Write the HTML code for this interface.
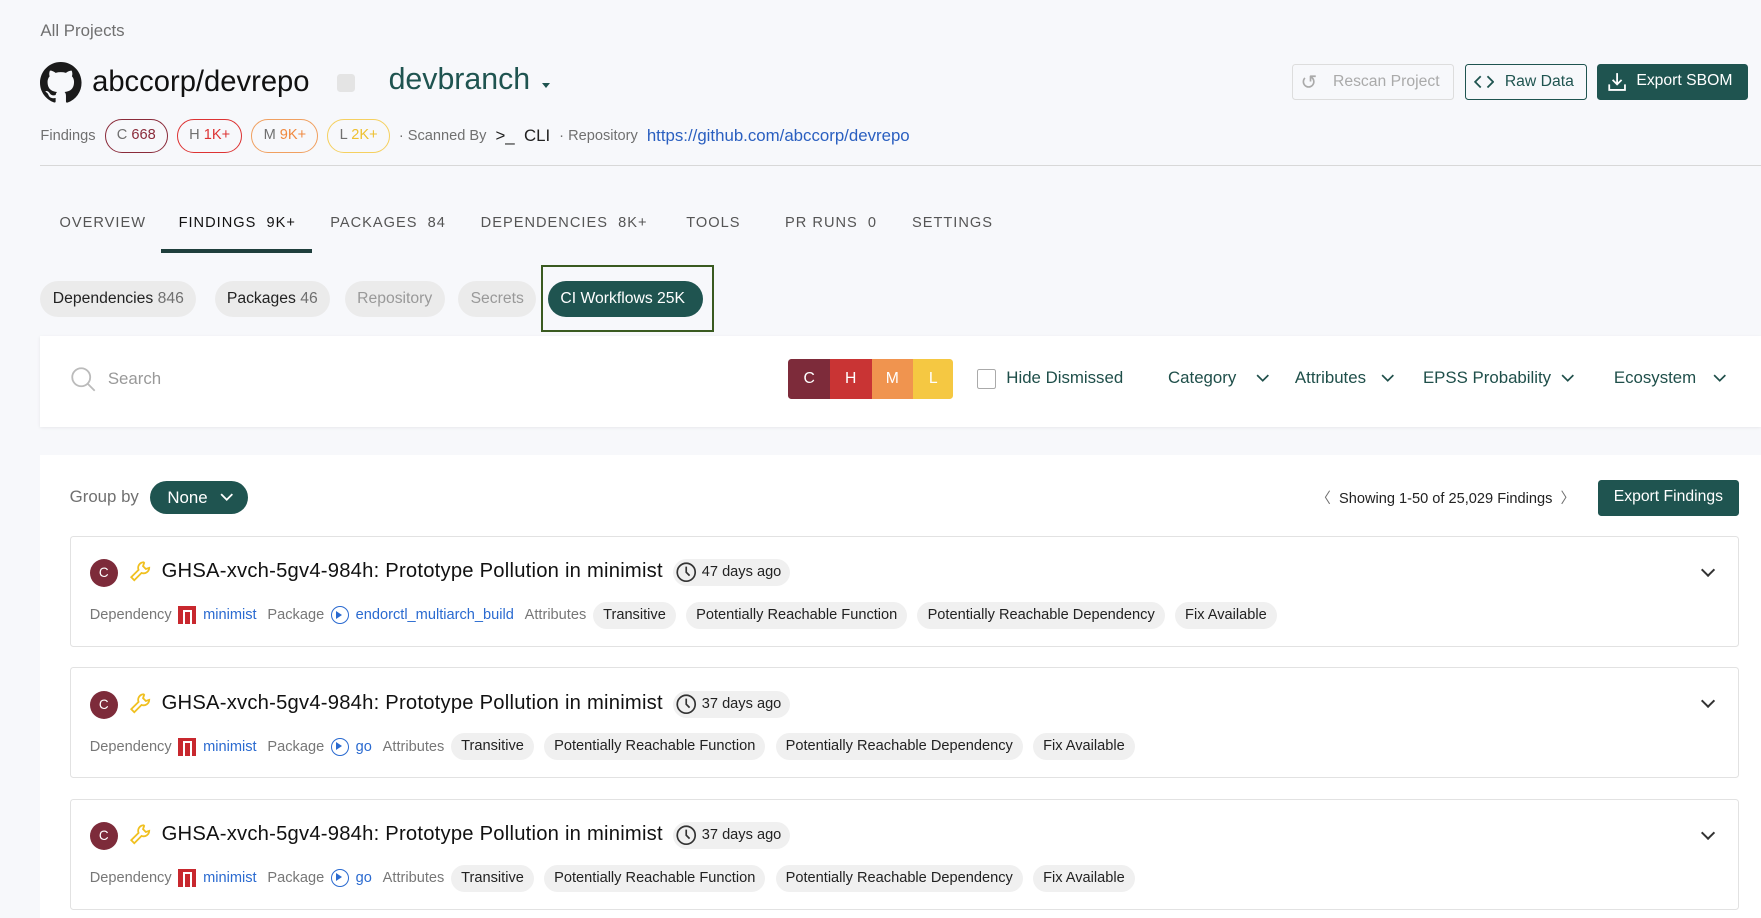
<!DOCTYPE html>
<html><head><meta charset="utf-8"><style>
*{box-sizing:border-box;margin:0;padding:0}
html,body{width:1761px;height:918px;overflow:hidden;background:#f7f8fb}
body{font-family:"Liberation Sans",sans-serif;color:#222}
#w{zoom:1.1231;width:1568px;height:818px;position:relative}
.a{position:absolute;white-space:nowrap}
.g{color:#707070}
.pill{display:inline-block;border-radius:16px;padding:0 10px;font-size:13px;height:30px;line-height:28px;border:1px solid}
.btn{position:absolute;border-radius:3px;font-size:14px;height:32px;line-height:30px;padding:0 10px}
.dg{background:#1f5450;color:#fff}
.tab{position:absolute;top:191px;font-size:13px;letter-spacing:0.9px;color:#555}
.chip{position:absolute;top:250px;height:32px;line-height:32px;border-radius:16px;background:#ebebeb;font-size:14px;padding:0 11px;color:#222}
.card{position:absolute;left:62px;width:1486px;height:99px;background:#fff;border:1px solid #e2e2e2;border-radius:3px}
.cb{position:absolute;left:17px;top:20px;width:25px;height:25px;border-radius:50%;background:#7d2b3a;color:#fff;font-size:12px;text-align:center;line-height:25px}
.tt{position:absolute;left:81px;top:21px;font-size:18px;color:#111;letter-spacing:0.2px}
.age{position:absolute;top:20px;height:24px;line-height:24px;border-radius:12px;background:#f0f0f0;font-size:13px;padding:0 8px 0 26px}
.row{position:absolute;left:17px;top:58px;font-size:13px;color:#777;display:flex;align-items:center;gap:6px;white-space:nowrap}
.row .l{color:#2a6ad0}
.tag{background:#f0f0f0;color:#222;border-radius:12px;height:24px;line-height:24px;padding:0 9px;margin-right:3px}
.npm{width:16px;height:16px;background:#c8282e;display:inline-block;position:relative}
.npm:after{content:"";position:absolute;left:4px;top:3px;width:8px;height:13px;border:2px solid #fff;border-bottom:none;box-sizing:border-box}
.chev{position:absolute;right:22px;top:25px;width:9px;height:9px;border-right:2px solid #333;border-bottom:2px solid #333;transform:rotate(45deg)}
.pk{display:inline-block;width:16px;height:16px;border:1.5px solid #2a6ad0;border-radius:50%;position:relative}
.pk:after{content:"";position:absolute;left:4px;top:3px;border:4px solid transparent;border-left:6px solid #2a6ad0;border-right:none}
</style></head><body><div id="w">
<div class="a g" style="left:36px;top:19px;font-size:15px">All Projects</div>
<svg class="a" style="left:36px;top:55px" width="37" height="37" viewBox="0 0 16 16"><path fill="#1b1b1b" d="M8 0C3.58 0 0 3.58 0 8c0 3.54 2.290 6.53 5.47 7.59.4.07.55-.17.55-.38v-1.33c-2.230.48-2.7-1.07-2.7-1.07-.36-.92-.89-1.17-.89-1.17-.73-.5.06-.49.06-.49.8.06 1.23.83 1.23.83.72 1.22 1.87.87 2.33.66.07-.52.28-.87.51-1.07-1.78-.2-3.65-.89-3.65-3.95 0-.87.31-1.59.82-2.15-.08-.2-.36-1.02.08-2.12 0 0 .67-.21 2.2.82a7.6 7.6 0 0 1 4 0c1.53-1.04 2.2-.82 2.2-.82.44 1.1.16 1.92.08 2.12.51.56.82 1.27.82 2.15 0 3.07-1.87 3.75-3.65 3.95.29.25.54.73.54 1.48v2.2c0 .21.15.46.55.38A8 8 0 0 0 16 8c0-4.42-3.58-8-8-8z"/></svg>
<div class="a" style="left:82px;top:59px;font-size:26px;color:#111">abccorp/devrepo</div>
<div class="a" style="left:300px;top:66px;width:16px;height:16px;background:#e4e4e4;border-radius:3px"></div>
<div class="a" style="left:346px;top:56px;font-size:27px;color:#1f5450">devbranch</div>
<div class="a" style="left:483px;top:74px;border:4px solid transparent;border-top:5px solid #1f5450"></div>
<div class="btn" style="left:1150px;top:57px;border:1px solid #ddd;color:#aaa;padding-left:36px;width:145px">Rescan Project</div>
<div class="a" style="left:1158px;top:62px;font-size:18px;color:#aaa">↺</div>
<div class="btn" style="left:1304px;top:57px;border:1px solid #1f5450;color:#1f5450;padding-left:35px;width:109px">Raw Data</div>
<svg class="a" style="left:1312px;top:66px" width="18" height="14" viewBox="0 0 18 14" fill="none" stroke="#1f5450" stroke-width="1.6"><path d="M6 2L1 7l5 5M12 2l5 5-5 5"/></svg>
<div class="btn dg" style="left:1422px;top:57px;padding-left:35px;width:134px">Export SBOM</div>
<svg class="a" style="left:1431px;top:64px" width="18" height="18" viewBox="0 0 18 18" fill="none" stroke="#fff" stroke-width="1.6"><path d="M9 1v10M5 7l4 4 4-4M2 11v5h14v-5"/></svg>
<div class="a" style="left:36px;top:106px;font-size:13px;display:flex;align-items:center;gap:8px">
<span class="g">Findings</span>
<span class="pill" style="border-color:#8a2b3a;color:#8a2b3a"><span class="g">C</span> 668</span>
<span class="pill" style="border-color:#d33;color:#d33"><span class="g">H</span> 1K+</span>
<span class="pill" style="border-color:#f0a060;color:#f08a40"><span class="g">M</span> 9K+</span>
<span class="pill" style="border-color:#f5d060;color:#eec030"><span class="g">L</span> 2K+</span>
<span class="g">· Scanned By</span><span style="font-size:15px">&gt;_&nbsp; CLI</span><span class="g">· Repository</span><span style="color:#2a5fc0;font-size:15px">https://github.com/abccorp/devrepo</span></div>
<div class="a" style="left:36px;top:147px;width:1532px;height:1px;background:#d8d8d8"></div>
<div class="tab" style="left:53px">OVERVIEW</div>
<div class="tab" style="left:159px;color:#111">FINDINGS&nbsp; 9K+</div>
<div class="a" style="left:143px;top:222px;width:135px;height:3px;background:#1f3f3c"></div>
<div class="tab" style="left:294px">PACKAGES&nbsp; 84</div>
<div class="tab" style="left:428px">DEPENDENCIES&nbsp; 8K+</div>
<div class="tab" style="left:611px">TOOLS</div>
<div class="tab" style="left:699px">PR RUNS&nbsp; 0</div>
<div class="tab" style="left:812px">SETTINGS</div>
<div class="chip" style="left:36px">Dependencies <span class="g">846</span></div>
<div class="chip" style="left:191px">Packages <span class="g">46</span></div>
<div class="chip" style="left:307px;color:#999">Repository</div>
<div class="chip" style="left:408px;color:#999">Secrets</div>
<div class="a" style="left:482px;top:236px;width:154px;height:60px;border:2px solid #3a5a20"></div>
<div class="chip dg" style="left:488px;width:138px;background:#1f5450;color:#fff">CI Workflows 25K</div>
<div class="a" style="left:36px;top:299px;width:1532px;height:81px;background:#fff;box-shadow:0 1px 3px rgba(0,0,0,.08)"></div>
<svg class="a" style="left:62px;top:326px" width="24" height="24" viewBox="0 0 24 24" fill="none" stroke="#bbb" stroke-width="1.6"><circle cx="10" cy="10" r="8"/><path d="M16 16l6 6"/></svg>
<div class="a" style="left:96px;top:329px;font-size:15px;color:#999">Search</div>
<div class="a" style="left:702px;top:320px;display:flex;height:35px;border-radius:3px;overflow:hidden;font-size:14px;color:#fff;line-height:35px;text-align:center">
<span style="width:37px;background:#7d2b3a">C</span><span style="width:37px;background:#c93434">H</span><span style="width:37px;background:#f0944f">M</span><span style="width:36px;background:#f5c842">L</span></div>
<div class="a" style="left:870px;top:329px;width:17px;height:17px;border:1.5px solid #aaa;border-radius:2px"></div>
<div class="a" style="left:896px;top:328px;font-size:15px;color:#1f4f4a">Hide Dismissed</div>
<div class="a" style="left:1040px;top:328px;font-size:15px;color:#1f4f4a">Category</div>
<div class="a" style="left:1153px;top:328px;font-size:15px;color:#1f4f4a">Attributes</div>
<div class="a" style="left:1267px;top:328px;font-size:15px;color:#1f4f4a">EPSS Probability</div>
<div class="a" style="left:1437px;top:328px;font-size:15px;color:#1f4f4a">Ecosystem</div>
<svg class="a" style="left:1118px;top:333px" width="12" height="8" viewBox="0 0 12 8" fill="none" stroke="#1f4f4a" stroke-width="1.5"><path d="M1 1l5 5 5-5"/></svg>
<svg class="a" style="left:1230px;top:333px" width="12" height="8" viewBox="0 0 12 8" fill="none" stroke="#1f4f4a" stroke-width="1.5"><path d="M1 1l5 5 5-5"/></svg>
<svg class="a" style="left:1390px;top:333px" width="12" height="8" viewBox="0 0 12 8" fill="none" stroke="#1f4f4a" stroke-width="1.5"><path d="M1 1l5 5 5-5"/></svg>
<svg class="a" style="left:1525px;top:333px" width="12" height="8" viewBox="0 0 12 8" fill="none" stroke="#1f4f4a" stroke-width="1.5"><path d="M1 1l5 5 5-5"/></svg>
<div class="a" style="left:36px;top:405px;width:1532px;height:413px;background:#fff"></div>
<div class="a g" style="left:62px;top:434px;font-size:15px">Group by</div>
<div class="a dg" style="left:134px;top:428px;width:87px;height:30px;border-radius:15px;font-size:15px;line-height:30px;padding-left:15px">None</div>
<svg class="a" style="left:196px;top:439px" width="12" height="8" viewBox="0 0 12 8" fill="none" stroke="#fff" stroke-width="1.6"><path d="M1 1l5 5 5-5"/></svg>
<div class="a" style="left:1172px;top:434px;font-size:13px;color:#222"><span class="g">〈</span>&nbsp; Showing 1-50 of 25,029 Findings &nbsp;<span class="g">〉</span></div>
<div class="btn dg" style="left:1423px;top:427px;width:125px;height:32px;font-size:14px;text-align:center">Export Findings</div>
<div class="card" style="top:477px"><div class="cb">C</div><svg class="a" style="left:52px;top:21px" width="20" height="20" viewBox="0 0 20 20" fill="none" stroke="#f0c020" stroke-width="1.6"><path d="M13 2a5 5 0 0 0-4.5 6.8L2 15.3 4.7 18l6.5-6.5A5 5 0 0 0 18 7l-3 1-2.5-2.5 1-3z"/></svg><div class="tt">GHSA-xvch-5gv4-984h: Prototype Pollution in minimist</div><div class="age" style="left:536px">47 days ago</div><svg class="a" style="left:538px;top:22px" width="20" height="20" viewBox="0 0 20 20" fill="none" stroke="#333" stroke-width="1.5"><circle cx="10" cy="10" r="8"/><path d="M10 5v5l3 3"/></svg><div class="chev"></div>
<div class="row">Dependency <span class="npm"></span><span class="l">minimist</span>&nbsp;Package <span class="pk"></span><span class="l">endorctl_multiarch_build</span>&nbsp;Attributes <span class="tag">Transitive</span><span class="tag">Potentially Reachable Function</span><span class="tag">Potentially Reachable Dependency</span><span class="tag">Fix Available</span></div></div>
<div class="card" style="top:594px"><div class="cb">C</div><svg class="a" style="left:52px;top:21px" width="20" height="20" viewBox="0 0 20 20" fill="none" stroke="#f0c020" stroke-width="1.6"><path d="M13 2a5 5 0 0 0-4.5 6.8L2 15.3 4.7 18l6.5-6.5A5 5 0 0 0 18 7l-3 1-2.5-2.5 1-3z"/></svg><div class="tt">GHSA-xvch-5gv4-984h: Prototype Pollution in minimist</div><div class="age" style="left:536px">37 days ago</div><svg class="a" style="left:538px;top:22px" width="20" height="20" viewBox="0 0 20 20" fill="none" stroke="#333" stroke-width="1.5"><circle cx="10" cy="10" r="8"/><path d="M10 5v5l3 3"/></svg><div class="chev"></div>
<div class="row">Dependency <span class="npm"></span><span class="l">minimist</span>&nbsp;Package <span class="pk"></span><span class="l">go</span>&nbsp;Attributes <span class="tag">Transitive</span><span class="tag">Potentially Reachable Function</span><span class="tag">Potentially Reachable Dependency</span><span class="tag">Fix Available</span></div></div>
<div class="card" style="top:711px"><div class="cb">C</div><svg class="a" style="left:52px;top:21px" width="20" height="20" viewBox="0 0 20 20" fill="none" stroke="#f0c020" stroke-width="1.6"><path d="M13 2a5 5 0 0 0-4.5 6.8L2 15.3 4.7 18l6.5-6.5A5 5 0 0 0 18 7l-3 1-2.5-2.5 1-3z"/></svg><div class="tt">GHSA-xvch-5gv4-984h: Prototype Pollution in minimist</div><div class="age" style="left:536px">37 days ago</div><svg class="a" style="left:538px;top:22px" width="20" height="20" viewBox="0 0 20 20" fill="none" stroke="#333" stroke-width="1.5"><circle cx="10" cy="10" r="8"/><path d="M10 5v5l3 3"/></svg><div class="chev"></div>
<div class="row">Dependency <span class="npm"></span><span class="l">minimist</span>&nbsp;Package <span class="pk"></span><span class="l">go</span>&nbsp;Attributes <span class="tag">Transitive</span><span class="tag">Potentially Reachable Function</span><span class="tag">Potentially Reachable Dependency</span><span class="tag">Fix Available</span></div></div>
</div></body></html>
